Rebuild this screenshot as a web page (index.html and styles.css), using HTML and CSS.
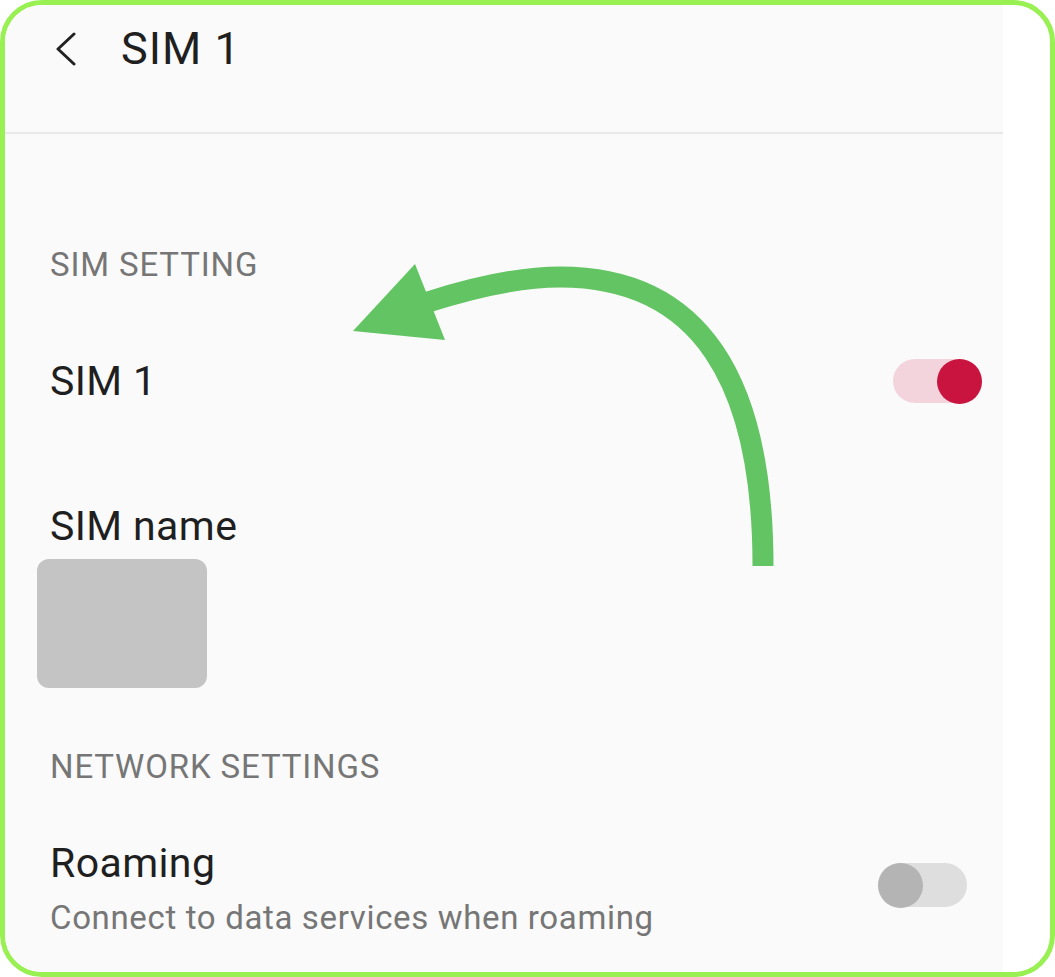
FILE: index.html
```html
<!DOCTYPE html>
<html>
<head>
    <title>SIM 1</title>
    <link rel="stylesheet" href="styles.css">
</head>
<body>
    <div class="frame">
        <div class="screen">
            <div class="top-bar">
                <svg class="back-icon" width="24" height="34" viewBox="0 0 24 34" fill="none" stroke="#222222" stroke-width="3" stroke-linecap="round" stroke-linejoin="round">
                    <polyline points="20 2 4 17 20 32"/>
                </svg>
                <h1 class="page-title">SIM 1</h1>
            </div>

            <div class="settings">
                <div class="section-label sim-label">SIM SETTING</div>

                <div class="setting-row sim-row">
                    <div class="setting-title">SIM 1</div>
                    <div class="switch on"><span class="knob"></span></div>
                </div>

                <div class="setting-title name-title">SIM name</div>
                <div class="name-placeholder"></div>

                <div class="section-label network-label">NETWORK SETTINGS</div>

                <div class="setting-row roaming-row">
                    <div class="setting-text">
                        <div class="setting-title">Roaming</div>
                        <div class="setting-summary">Connect to data services when roaming</div>
                    </div>
                    <div class="switch off"><span class="knob"></span></div>
                </div>
            </div>
        </div>

        <svg class="pointer-arrow" width="1055" height="977" viewBox="0 0 1055 977">
            <path d="M763 566 C763 380 700 277 560 277 C520 277 475 287 428 302" fill="none" stroke="#62c462" stroke-width="21"/>
            <polygon points="353 331 415 264 445 340" fill="#62c462"/>
        </svg>
    </div>
</body>
</html>
```

FILE: styles.css
```css
:root {
    --frame-green: #98f052;
    --screen-bg: #fafafa;
    --text-main: #1f1f1f;
    --text-muted: #767676;
    --accent: #c8143f;
    --accent-soft: #f3d4dc;
}

* {
    margin: 0;
    padding: 0;
    box-sizing: border-box;
}

body {
    background-color: #ffffff;
    font-family: Roboto, "Noto Sans", Arial, sans-serif;
}

.frame {
    position: relative;
    width: 1055px;
    height: 977px;
    border: 5px solid var(--frame-green);
    border-radius: 42px;
    background-color: #ffffff;
    overflow: hidden;
}

.screen {
    width: 998px;
    height: 100%;
    background-color: var(--screen-bg);
}

/* ========== Top Bar ========== */
.top-bar {
    display: flex;
    align-items: center;
    height: 129px;
    padding: 14px 0 53px 49px;
    border-bottom: 2px solid #e9e9e9;
}

.back-icon {
    flex-shrink: 0;
}

.page-title {
    margin-left: 43px;
    font-size: 45px;
    font-weight: 400;
    line-height: 60px;
    letter-spacing: 1px;
    color: var(--text-main);
}

/* ========== Settings List ========== */
.settings {
    display: flex;
    flex-direction: column;
    padding-left: 45px;
}

.section-label {
    font-size: 33px;
    line-height: 40px;
    letter-spacing: 0.85px;
    color: var(--text-muted);
}

.sim-label {
    margin-top: 111px;
}

.network-label {
    margin-top: 59px;
}

.setting-row {
    display: flex;
    align-items: center;
    justify-content: space-between;
}

.setting-title {
    font-size: 41px;
    line-height: 50px;
    letter-spacing: 0.4px;
    color: var(--text-main);
}

.sim-row {
    height: 60px;
    margin-top: 66px;
    padding-right: 21px;
}

.name-title {
    margin-top: 95px;
    line-height: 40px;
}

.name-placeholder {
    width: 170px;
    height: 129px;
    margin: 13px 0 0 -13px;
    border-radius: 12px;
    background-color: #c4c4c4;
}

.roaming-row {
    margin-top: 51px;
    padding-right: 36px;
}

.setting-summary {
    margin-top: 10px;
    font-size: 33px;
    line-height: 40px;
    letter-spacing: 0.65px;
    color: var(--text-muted);
}

/* ========== Switches ========== */
.switch {
    display: flex;
    align-items: center;
    width: 89px;
    height: 44px;
    border-radius: 22px;
}

.switch .knob {
    width: 45px;
    height: 45px;
    border-radius: 50%;
}

.switch.on {
    justify-content: flex-end;
    background-color: var(--accent-soft);
}

.switch.on .knob {
    background-color: var(--accent);
}

.switch.off {
    justify-content: flex-start;
    margin-bottom: 6px;
    background-color: #dedede;
}

.switch.off .knob {
    background-color: #b4b4b4;
}

/* ========== Annotation ========== */
.pointer-arrow {
    position: absolute;
    top: -5px;
    left: -5px;
}
```
